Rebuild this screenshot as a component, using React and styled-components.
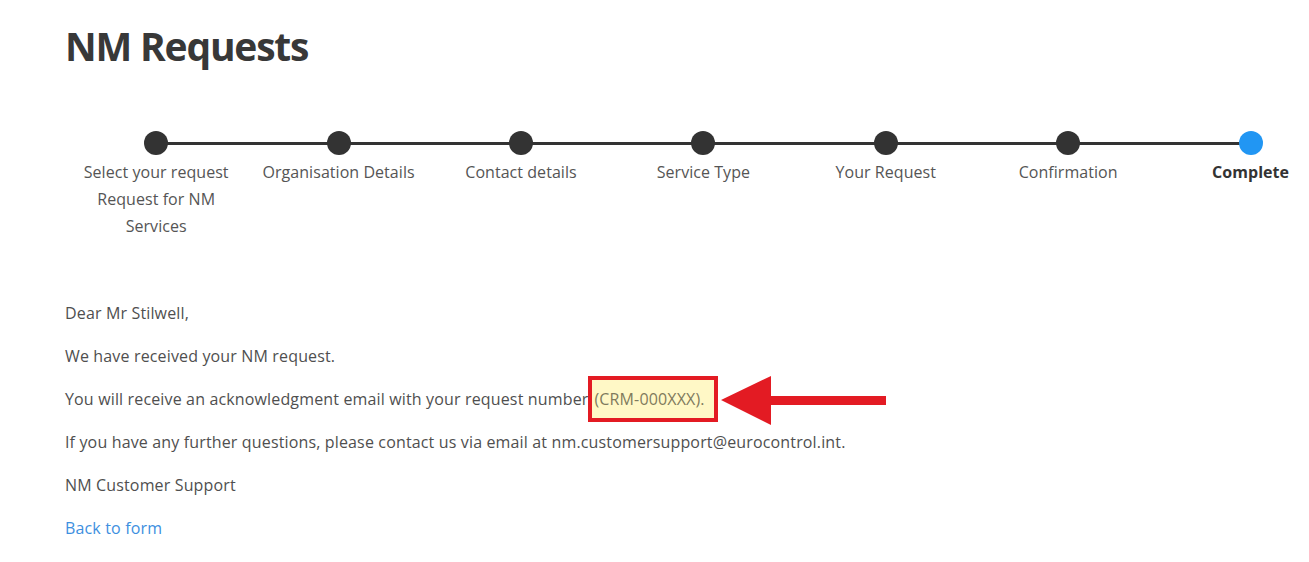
import React from "react";
import styled, { createGlobalStyle } from "styled-components";

const Global = createGlobalStyle`
  html, body { margin: 0; padding: 0; background: #fff; overflow: hidden; }
  body { font-family: "Open Sans", "Liberation Sans", sans-serif; color: #4f4f4f; }
`;

const Page = styled.div`
  padding-left: 65px;
  width: 1300px;
`;

const Title = styled.h1`
  margin: 22px 0 0;
  font-size: 39px;
  line-height: 48px;
  font-weight: 700;
  color: #383838;
  letter-spacing: -1.2px;
`;

const Stepper = styled.ol`
  list-style: none;
  margin: 61px 0 0;
  padding: 0;
  display: grid;
  grid-template-columns: repeat(7, 182.4px);
`;

const Step = styled.li`
  position: relative;
  display: flex;
  flex-direction: column;
  align-items: center;
  &:not(:first-child)::before {
    content: "";
    position: absolute;
    top: 10.5px;
    left: -50%;
    right: 50%;
    height: 3px;
    background: #333;
  }
`;

const Dot = styled.span`
  position: relative;
  z-index: 1;
  width: 24px;
  height: 24px;
  border-radius: 50%;
  background: ${(p) => (p.$active ? "#2196f3" : "#333")};
`;

const StepLabel = styled.span`
  margin-top: 4px;
  font-size: 16px;
  letter-spacing: 0.05px;
  line-height: 27px;
  text-align: center;
  white-space: nowrap;
  color: ${(p) => (p.$active ? "#333" : "#555")};
  font-weight: ${(p) => (p.$active ? 700 : 400)};
`;

const Message = styled.div`
  margin-top: 61px;
  display: flex;
  flex-direction: column;
  gap: 19px;
`;

const Para = styled.p`
  margin: 0;
  font-size: 16px;
  letter-spacing: 0.15px;
  line-height: 24px;
  color: #4f4f4f;
  white-space: nowrap;
`;

const Highlight = styled.span`
  background: #fff8c6;
  color: #7f7b5d;
  border: 4px solid #e31b23;
  padding: 8px 9px 8px 2px;
`;

const Arrow = styled.svg`
  vertical-align: middle;
  margin: -20px 0 -20px 3px;
`;

const BackLink = styled.a`
  color: #3d8fe0;
  text-decoration: none;
`;

const steps = [
  { label: ["Select your request", "Request for NM", "Services"] },
  { label: ["Organisation Details"] },
  { label: ["Contact details"] },
  { label: ["Service Type"] },
  { label: ["Your Request"] },
  { label: ["Confirmation"] },
  { label: ["Complete"], active: true },
];

export default function App() {
  return (
    <>
      <Global />
      <Page>
        <Title>NM Requests</Title>
        <Stepper>
          {steps.map((s, i) => (
            <Step key={i}>
              <Dot $active={s.active} />
              <StepLabel $active={s.active}>
                {s.label.map((l, j) => (
                  <React.Fragment key={j}>
                    {j > 0 && <br />}
                    {l}
                  </React.Fragment>
                ))}
              </StepLabel>
            </Step>
          ))}
        </Stepper>
        <Message>
          <Para>Dear Mr Stilwell,</Para>
          <Para>We have received your NM request.</Para>
          <Para>
            You will receive an acknowledgment email with your request number
            <Highlight>(CRM-000XXX).</Highlight>
            <Arrow width="166" height="50" viewBox="0 0 166 50" aria-hidden="true">
              <polygon points="0,24 50,0 50,20 165,20 165,29 50,29 50,49" fill="#e31b23" />
            </Arrow>
          </Para>
          <Para>
            If you have any further questions, please contact us via email at
            nm.customersupport@eurocontrol.int.
          </Para>
          <Para>NM Customer Support</Para>
          <Para>
            <BackLink href="#">Back to form</BackLink>
          </Para>
        </Message>
      </Page>
    </>
  );
}
